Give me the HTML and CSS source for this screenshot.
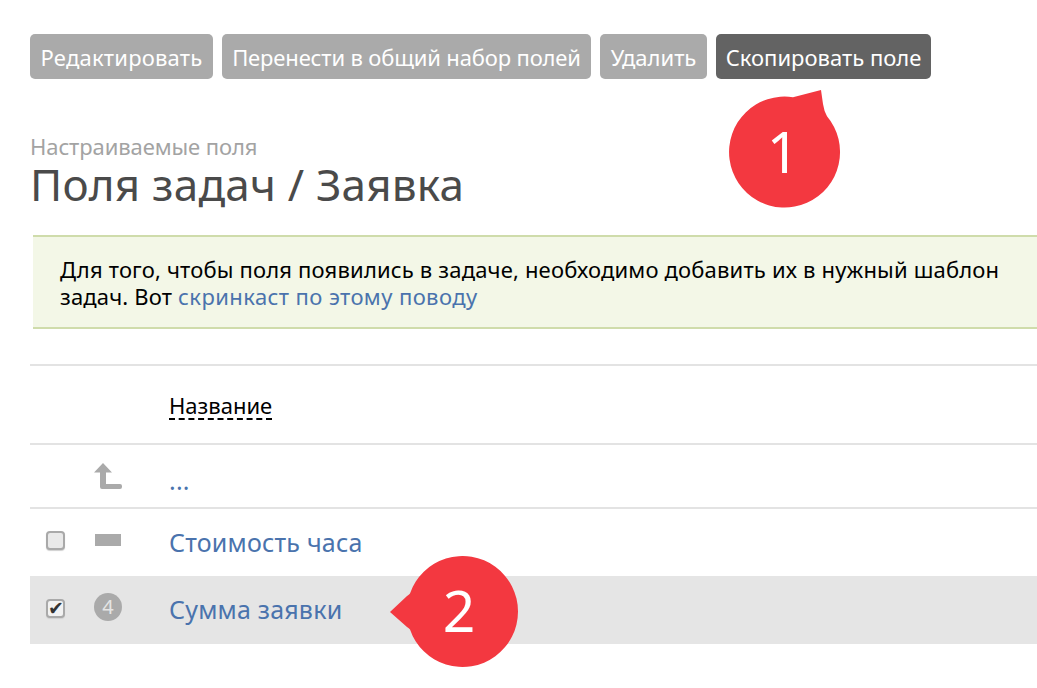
FILE: index.html
```html
<!DOCTYPE html>
<html lang="ru">
<head>
<meta charset="utf-8">
<title>Поля задач</title>
<link rel="stylesheet" href="styles.css">
</head>
<body>
<div class="toolbar">
  <a class="btn b1">Редактировать</a>
  <a class="btn b2">Перенести в общий набор полей</a>
  <a class="btn b3">Удалить</a>
  <a class="btn b4 dark">Скопировать поле</a>
</div>
<div class="subtitle">Настраиваемые поля</div>
<h1 class="title">Поля задач / Заявка</h1>
<div class="notice">Для того, чтобы поля появились в задаче, необходимо добавить их в нужный шаблон<br>задач. Вот <a class="link screencast">скринкаст по этому поводу</a></div>
<div class="table">
  <div class="row head">
    <div class="c-check"></div><div class="c-icon"></div>
    <div class="c-name"><span class="sort">Название</span></div>
  </div>
  <div class="row up">
    <div class="c-check"></div>
    <div class="c-icon"><svg width="28" height="26" viewBox="0 0 28 26"><path d="M0 9.500 L9 0 L18 9.500 H12 V21 H26 Q28 21 28 23 V24 Q28 26 26 26 H8 Q6 26 6 24 V9.500 Z" fill="#aaa"/></svg></div>
    <div class="c-name"><a class="link">...</a></div>
  </div>
  <div class="row plain">
    <div class="c-check"><input class="cb" type="checkbox"></div>
    <div class="c-icon"><span class="dash"></span></div>
    <div class="c-name"><a class="link">Стоимость часа</a></div>
  </div>
  <div class="row selected">
    <div class="c-check"><input class="cb" type="checkbox" checked></div>
    <div class="c-icon"><span class="num">4</span></div>
    <div class="c-name"><a class="link">Сумма заявки</a></div>
  </div>
</div>
<div class="callout one">
  <svg width="112" height="120" viewBox="0 0 112 120"><path d="M64 8.200 L92 1 L94 15 Q95 22 98 27.300 A55.500 55.500 0 1 1 64 8.200 Z" fill="#f33840"/></svg>
  <span class="callout-num">1</span>
</div>
<div class="callout two">
  <svg width="128" height="112" viewBox="0 0 128 112"><path d="M0 56 L17 40 Q19 38.500 20 37.500 A55.500 55.500 0 1 1 20 73.500 Q19 72 17 71 Z" fill="#f33840"/></svg>
  <span class="callout-num">2</span>
</div>
</body>
</html>
```
FILE: styles.css
```css
html, body { margin: 0; padding: 0; background: #fff; overflow: hidden; }
body { width: 1037px; height: 688px; position: relative; font-family: "Noto Sans", "Open Sans", sans-serif; color: #000; }
.toolbar { display: flex; gap: 9px; padding: 34px 0 0 30px; }
.btn { height: 45px; box-sizing: border-box; display: flex; align-items: center; justify-content: center; background: #aaa; color: #fff; border-radius: 5px; font-size: 22px; letter-spacing: 0; white-space: nowrap; }
.b1 { width: 183px; letter-spacing: 0.2px; }
.b2 { width: 369px; letter-spacing: -0.15px; }
.b3 { width: 107px; }
.b4 { width: 215px; }
.dark { background: #636363; }
.subtitle { margin: 55px 0 0 30px; font-size: 22px; line-height: 24px; color: #a3a3a3; letter-spacing: -0.1px; }
.title { margin: 1px 0 0 30px; font-size: 44px; line-height: 50px; font-weight: 400; color: #4a4a4a; letter-spacing: 0.2px; }
.notice { margin: 26px 0 0 33px; height: 94px; box-sizing: border-box; padding: 19px 0 0 27px; background: #f3f7e7; border-top: 2px solid #cfdcab; border-bottom: 2px solid #cfdcab; font-size: 22px; line-height: 27px; white-space: nowrap; overflow: hidden; letter-spacing: 0.17px; }
.link { color: #4a73ad; }
.screencast { display: inline-block; letter-spacing: 0.41px; }
.table { margin: 35px 0 0 30px; border-top: 2px solid #e3e3e3; }
.row { display: flex; align-items: center; font-size: 25px; letter-spacing: 0.2px; }
.head { height: 77px; border-bottom: 2px solid #e3e3e3; font-size: 22px; letter-spacing: 0; }
.up { height: 62px; border-bottom: 2px solid #e3e3e3; }
.up .c-name { padding-top: 8px; }
.plain { height: 67px; }
.selected { height: 68px; background: #e5e5e5; }
.plain .c-name, .selected .c-name { margin-top: -2px; }
.c-check { width: 52px; padding-left: 16px; box-sizing: border-box; display: flex; align-items: center; }
.c-icon { width: 87px; padding-left: 12px; box-sizing: border-box; display: flex; align-items: center; }
.c-name { flex: 1; }
.sort { border-bottom: 2px dashed #000; line-height: 26px; display: inline-block; }
.cb { appearance: none; -webkit-appearance: none; width: 19px; height: 19px; margin: -4px 0 0; box-sizing: border-box; border: 2px solid #a9a9a9; border-radius: 4px; background: #e9e9e9; box-shadow: 0 1px 1px #d0d0d0; position: relative; }
.cb:checked { background: #f2f2f2; }
.cb:checked::after { content: "✔"; position: absolute; left: 0; top: -3px; width: 15px; text-align: center; font-size: 19px; line-height: 20px; color: #333; font-family: "DejaVu Sans", sans-serif; }
.dash { width: 26px; height: 12px; background: #aaa; display: block; margin: -6px 0 0 1px; }
.num { width: 28px; height: 28px; border-radius: 50%; background: #aaa; color: #e5e5e5; font-size: 20px; line-height: 28px; text-align: center; display: block; margin-top: -6px; letter-spacing: 0; }
.callout { position: absolute; }
.callout svg { display: block; }
.callout-num { position: absolute; color: #fff; font-size: 57px; line-height: 60px; width: 112px; text-align: center; }
.one { left: 729px; top: 89px; }
.one .callout-num { left: -2px; top: 32px; }
.two { left: 390px; top: 556px; }
.two .callout-num { left: 13px; top: 24px; }
```
